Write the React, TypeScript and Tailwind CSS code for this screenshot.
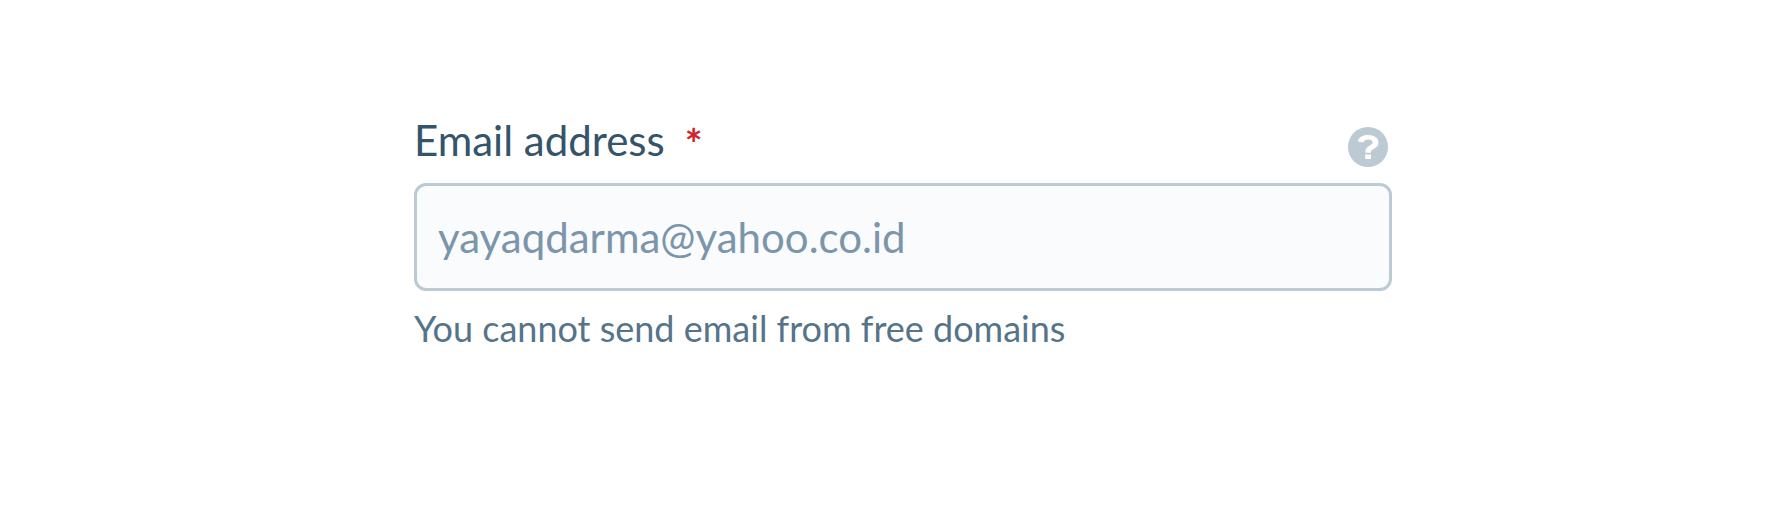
import React from "react";

export default function App() {
  return (
    <main className="min-h-screen bg-white pt-[117px] pr-6 pl-[42px] font-['Lato',sans-serif]">
      <div className="mx-auto w-full max-w-[978px]">
        <div className="flex items-end justify-between pr-1">
          <label htmlFor="email" className="flex items-end gap-5 pb-2 text-[42px] leading-[46px] text-[#33546b]">
            Email address
            <span aria-hidden="true" className="leading-[38px] font-bold text-[#d2232a]">*</span>
          </label>
          <button type="button" aria-label="Help" className="mb-1">
            <svg viewBox="0 0 40 40" className="size-10" aria-hidden="true">
              <circle cx="20" cy="20" r="20" fill="#bccad3" />
              <path
                d="M9.800 14.500C10.800 10.300 14.500 8 20 8c6.200 0 10.500 2.900 10.500 7.400 0 3-1.700 4.800-4.500 6.300-2.200 1.200-3 1.900-3 3.500v.5h-5.600v-1.200c0-3 1.700-4.600 4.300-6.100 2-1.100 2.900-1.800 2.900-3.200 0-1.600-1.700-2.800-4.400-2.800-2.600 0-4.300 1.100-4.900 3.100zM17.200 27.500h5.800v4.500h-5.800z"
                fill="#fff"
              />
            </svg>
          </button>
        </div>
        <input
          id="email"
          type="email"
          required
          defaultValue="yayaqdarma@yahoo.co.id"
          aria-describedby="email-hint"
          className="mt-3 block h-[108px] w-full rounded-xl border-[3px] border-[#bccad3] bg-[#fafbfd] px-[21px] text-[42px] text-[#7b95aa] outline-none"
        />
        <p id="email-hint" className="mt-4 text-[36px] leading-[42px] text-[#55748a]">
          You cannot send email from free domains
        </p>
      </div>
    </main>
  );
}
